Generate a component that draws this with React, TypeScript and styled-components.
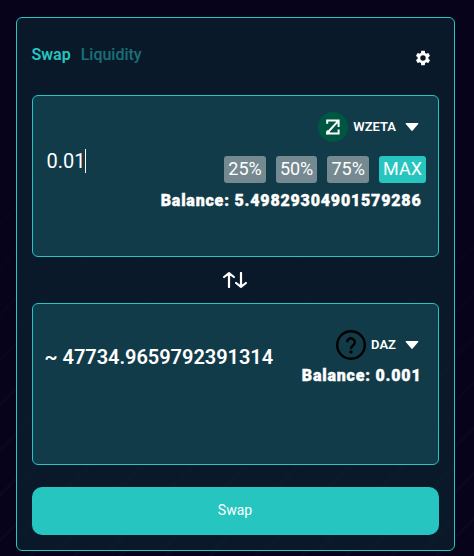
import React from "react";
import styled, { createGlobalStyle } from "styled-components";

const accent = "#26c5bf";

const GlobalStyle = createGlobalStyle`
  * { box-sizing: border-box; }
  body {
    margin: 0;
    background: #06031a;
    color: #fff;
    font-family: Roboto, sans-serif;
    overflow: hidden;
  }
  button { font-family: inherit; border: 0; padding: 0; cursor: pointer; }
`;

const Page = styled.main`
  height: 556px;
  padding: 17px 19px 5px 16px;
  background:
    linear-gradient(to bottom, #06031a 0, rgba(6, 3, 26, 0) 500px),
    repeating-linear-gradient(135deg, #06031a 0 28px, #090820 29px 31px, #06031a 32px);
`;

const Card = styled.section`
  display: flex;
  flex-direction: column;
  height: 534px;
  padding: 0 15px;
  border: 1px solid ${accent};
  border-radius: 6px;
  background:
    linear-gradient(rgba(10, 25, 42, 0.98), rgba(10, 25, 42, 0.85)),
    repeating-linear-gradient(135deg, #0a1929 0 32px, #10232f 33px 36px, #0a1929 37px);
`;

const Header = styled.header`
  display: flex;
  justify-content: space-between;
  height: 77px;
  padding: 27px 7px 0 0;
`;

const Tabs = styled.nav`
  display: flex;
  gap: 10px;
  margin-left: -0.5px;
`;

const Tab = styled.button<{ $active?: boolean }>`
  height: 20px;
  background: none;
  color: ${accent};
  font-size: 16px;
  font-weight: ${(p) => (p.$active ? 600 : 500)};
  line-height: 20px;
  opacity: ${(p) => (p.$active ? 1 : 0.5)};
`;

const IconButton = styled.button`
  display: flex;
  width: 18px;
  height: 18px;
  margin-top: 4px;
  background: none;
  color: #fff;
`;

const Panel = styled.div`
  display: flex;
  justify-content: space-between;
  flex: none;
  height: 162px;
  padding: 0 12px 0 13px;
  border: 1px solid ${accent};
  border-radius: 6px;
  background: rgba(18, 60, 74, 0.98);
`;

const AmountInput = styled.div`
  display: flex;
  align-items: center;
  align-self: flex-start;
  height: 24px;
  margin: 53px 0 0 0.5px;
  font-size: 20px;
  line-height: 24px;
  white-space: nowrap;
`;

const Caret = styled.span`
  width: 1px;
  height: 24px;
  margin-left: -0.5px;
  background: #fff;
`;

const Estimate = styled.div`
  height: 24px;
  margin: 41px 0 0 -1.5px;
  font-size: 20px;
  font-weight: 600;
  line-height: 24px;
  letter-spacing: -0.04px;
  white-space: nowrap;
`;

const Side = styled.div<{ $top: number }>`
  display: flex;
  flex-direction: column;
  align-items: flex-end;
  padding-top: ${(p) => p.$top}px;
`;

const TokenButton = styled.button`
  display: flex;
  align-items: center;
  height: 30px;
  margin-right: 7px;
  background: none;
  color: #fff;
`;

const Symbol = styled.span`
  margin: 0 9px 0 5px;
  font-size: 13px;
  font-weight: 600;
  line-height: 16px;
`;

const Presets = styled.div`
  display: flex;
  gap: 10px;
  margin-top: 14px;
`;

const Preset = styled.button<{ $max?: boolean }>`
  width: ${(p) => (p.$max ? 47 : 41.6)}px;
  height: 27px;
  padding-bottom: 2px;
  border-radius: 3px;
  background: ${(p) => (p.$max ? accent : "#748990")};
  color: #fff;
  font-size: 18px;
  line-height: 25px;
`;

const Balance = styled.div<{ $gap: number }>`
  height: 20px;
  margin: ${(p) => p.$gap}px 4.5px 0 0;
  font-size: 16px;
  font-weight: 900;
  line-height: 20px;
  letter-spacing: 0.8px;
  white-space: nowrap;
  -webkit-text-stroke: 0.4px #fff;
`;

const Switch = styled.div`
  display: flex;
  flex: none;
  align-items: center;
  justify-content: center;
  height: 46px;
  padding-right: 1px;
`;

const SubmitButton = styled.button`
  flex: none;
  height: 48px;
  margin-top: 22px;
  padding: 0 1px 2px 0;
  border-radius: 10px;
  background: ${accent};
  color: #fff;
  font-size: 14px;
  line-height: 20px;
`;

const Gear = () => (
  <svg width="18" height="18" viewBox="0 0 24 24" fill="currentColor">
    <path d="M19.14 12.94c.04-.3.06-.61.06-.94 0-.32-.02-.64-.07-.94l2.03-1.58a.49.49 0 0 0 .12-.61l-1.92-3.32a.488.488 0 0 0-.59-.22l-2.39.96c-.5-.38-1.03-.7-1.62-.94l-.36-2.54a.484.484 0 0 0-.48-.41h-3.84c-.24 0-.43.17-.47.41l-.36 2.54c-.59.24-1.13.57-1.62.94l-2.39-.96c-.22-.08-.47 0-.59.22L2.74 8.87c-.12.21-.08.47.12.61l2.03 1.58c-.05.3-.09.63-.09.94s.02.64.07.94l-2.03 1.58a.49.49 0 0 0-.12.61l1.92 3.32c.12.22.37.29.59.22l2.39-.96c.5.38 1.03.7 1.62.94l.36 2.54c.05.24.24.41.48.41h3.84c.24 0 .44-.17.47-.41l.36-2.54c.59-.24 1.13-.56 1.62-.94l2.39.96c.22.08.47 0 .59-.22l1.92-3.32c.12-.22.07-.47-.12-.61l-2.01-1.58zM12 15.6A3.6 3.6 0 1 1 12 8.4a3.6 3.6 0 0 1 0 7.2z" />
  </svg>
);

const ZetaLogo = () => (
  <svg width="30" height="30" viewBox="0 0 30 30">
    <circle cx="15" cy="15" r="15" fill="#005741" />
    <path
      d="M9.2 11.8V8.4H20.6V15M9.2 21L20.3 8.9M8.4 21.5H20.6V17.5"
      fill="none"
      stroke="#fff"
      strokeWidth="2"
    />
    <path d="M8.2 22.5V19.3L9.6 18L12.5 21.5Z" fill="#fff" />
  </svg>
);

const UnknownLogo = () => (
  <svg width="30" height="30" viewBox="0 0 30 30" fill="none" stroke="#000">
    <circle cx="15" cy="15" r="13.8" strokeWidth="2.4" />
    <path d="M11.2 12.3a3.8 3.8 0 1 1 6.5 2.5c-1.5 1.4-2.7 2-2.7 4.2" strokeWidth="2.4" />
    <circle cx="15" cy="21.9" r="1.6" fill="#000" stroke="none" />
  </svg>
);

const DownArrow = () => (
  <svg width="14" height="8" viewBox="0 0 14 8">
    <path d="M1.2 0h11.6c.6 0 .7.5.4.9L7.7 7.5c-.4.5-1 .5-1.4 0L.8.9C.5.5.6 0 1.2 0z" fill="#fff" />
  </svg>
);

const SwapArrows = () => (
  <svg width="24" height="16" viewBox="0 0 24 16" fill="none" stroke="#fff" strokeWidth="2.2" strokeLinecap="round" strokeLinejoin="round">
    <path d="M6 15V1.2M1.1 5L6 1.2L10.9 5M18 1V14.8M13.1 11L18 14.8L22.9 11" />
  </svg>
);

export default function App() {
  return (
    <>
      <GlobalStyle />
      <Page>
        <Card>
          <Header>
            <Tabs>
              <Tab $active>Swap</Tab>
              <Tab>Liquidity</Tab>
            </Tabs>
            <IconButton aria-label="Settings">
              <Gear />
            </IconButton>
          </Header>
          <Panel>
            <AmountInput>
              0.01
              <Caret />
            </AmountInput>
            <Side $top={16}>
              <TokenButton>
                <ZetaLogo />
                <Symbol>WZETA</Symbol>
                <DownArrow />
              </TokenButton>
              <Presets>
                <Preset>25%</Preset>
                <Preset>50%</Preset>
                <Preset>75%</Preset>
                <Preset $max>MAX</Preset>
              </Presets>
              <Balance $gap={8}>Balance: 5.49829304901579286</Balance>
            </Side>
          </Panel>
          <Switch>
            <SwapArrows />
          </Switch>
          <Panel>
            <Estimate>~ 47734.9659792391314</Estimate>
            <Side $top={26}>
              <TokenButton>
                <UnknownLogo />
                <Symbol>DAZ</Symbol>
                <DownArrow />
              </TokenButton>
              <Balance $gap={6}>Balance: 0.001</Balance>
            </Side>
          </Panel>
          <SubmitButton>Swap</SubmitButton>
        </Card>
      </Page>
    </>
  );
}
